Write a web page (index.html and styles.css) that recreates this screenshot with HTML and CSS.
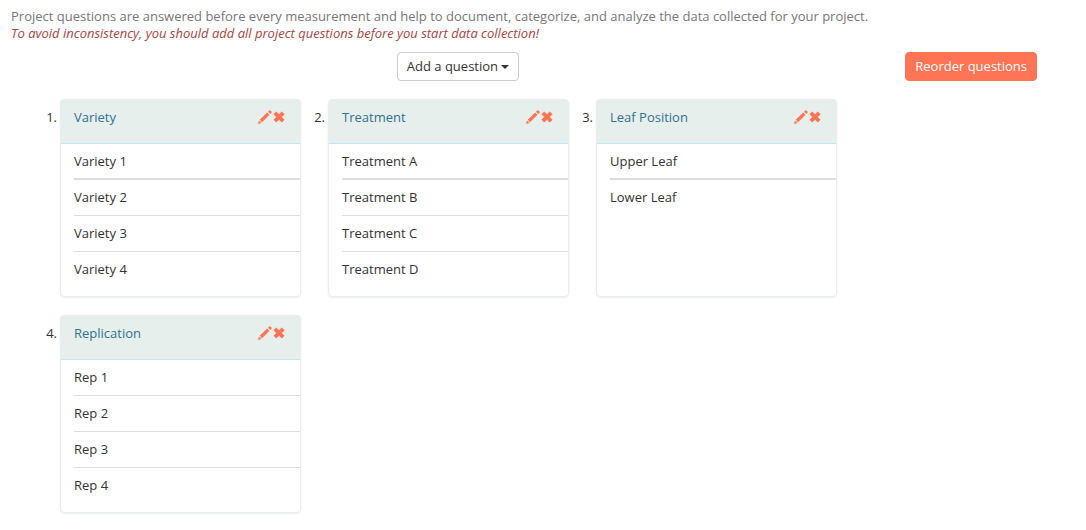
FILE: index.html
```
<!DOCTYPE html>
<html lang="en">
<head>
	<meta charset="utf-8">
	<title>Project Questions</title>
	<link rel="stylesheet" href="styles.css">
</head>
<body>
	<!-- Icon shapes -->
	<svg class="sprite" aria-hidden="true">
		<symbol id="pencil" viewBox="0 0 14 14">
			<path d="M0 14l1-3.600 2.600 2.600zM1.700 9.700L9.200 2.500l2.300 2.300-7.400 7.400zM10 1.700L11.200.5q.6-.6 1.200 0l1.100 1.100q.6.600 0 1.200l-1.200 1.200z"/>
		</symbol>
		<symbol id="remove" viewBox="0 0 12 12">
			<path d="M3.200.6L6 3.300 8.800.6 11.600 3.200 8.700 6l2.900 2.800-2.800 2.600L6 8.700l-2.800 2.700L.4 8.800 3.300 6 .4 3.200z"/>
		</symbol>
	</svg>

	<div class="intro">
		<p>Project questions are answered before every measurement and help to document, categorize, and analyze the data collected for your project.</p>
		<p class="warning">To avoid inconsistency, you should add all project questions before you start data collection!</p>
	</div>

	<div class="toolbar">
		<div class="toolbar-main">
			<button type="button" class="btn">Add a question <span class="caret"></span></button>
		</div>
		<button type="button" class="btn btn-primary">Reorder questions</button>
	</div>

	<ol class="questions">
		<li class="question">
			<span class="number">1.</span>
			<div class="card">
				<div class="card-header">
					<a href="#">Variety</a>
					<span class="actions">
						<button type="button" aria-label="Edit"><svg width="14" height="14"><use href="#pencil"/></svg></button>
						<button type="button" aria-label="Remove"><svg width="12" height="12"><use href="#remove"/></svg></button>
					</span>
				</div>
				<ul class="answers">
					<li class="thick">Variety 1</li>
					<li>Variety 2</li>
					<li>Variety 3</li>
					<li>Variety 4</li>
				</ul>
			</div>
		</li>
		<li class="question">
			<span class="number">2.</span>
			<div class="card">
				<div class="card-header">
					<a href="#">Treatment</a>
					<span class="actions">
						<button type="button" aria-label="Edit"><svg width="14" height="14"><use href="#pencil"/></svg></button>
						<button type="button" aria-label="Remove"><svg width="12" height="12"><use href="#remove"/></svg></button>
					</span>
				</div>
				<ul class="answers">
					<li class="thick">Treatment A</li>
					<li>Treatment B</li>
					<li>Treatment C</li>
					<li>Treatment D</li>
				</ul>
			</div>
		</li>
		<li class="question">
			<span class="number">3.</span>
			<div class="card">
				<div class="card-header">
					<a href="#">Leaf Position</a>
					<span class="actions">
						<button type="button" aria-label="Edit"><svg width="14" height="14"><use href="#pencil"/></svg></button>
						<button type="button" aria-label="Remove"><svg width="12" height="12"><use href="#remove"/></svg></button>
					</span>
				</div>
				<ul class="answers">
					<li class="thick">Upper Leaf</li>
					<li>Lower Leaf</li>
				</ul>
			</div>
		</li>
		<li class="question">
			<span class="number">4.</span>
			<div class="card">
				<div class="card-header">
					<a href="#">Replication</a>
					<span class="actions">
						<button type="button" aria-label="Edit"><svg width="14" height="14"><use href="#pencil"/></svg></button>
						<button type="button" aria-label="Remove"><svg width="12" height="12"><use href="#remove"/></svg></button>
					</span>
				</div>
				<ul class="answers">
					<li>Rep 1</li>
					<li>Rep 2</li>
					<li>Rep 3</li>
					<li>Rep 4</li>
				</ul>
			</div>
		</li>
	</ol>
</body>
</html>
```
FILE: styles.css
```
* { box-sizing: border-box; }
body { margin: 0; padding: 8px 0 0; background: #fff; color: #333; font: 13px/18px "Open Sans", sans-serif; }
p, ol, ul { margin: 0; padding: 0; }
ol, ul { list-style: none; }
.sprite { display: none; }

.intro { padding: 0 11px; color: #777; line-height: 17px; }
.warning { color: #a94442; font-style: italic; }

/* Toolbar */

.toolbar { display: flex; padding: 10px 49px 0 11px; }
.toolbar-main { flex: 1; text-align: center; }
.btn { height: 29px; padding: 0 9px 2px; border: 1px solid #ccc; border-radius: 4px; background: #fff; color: #333; font: inherit; cursor: pointer; }
.btn-primary { border-color: #ff7454; background: #ff7454; color: #fff; }
.caret { display: inline-block; border: 4px solid transparent; border-top-color: #333; border-bottom: 0; vertical-align: middle; }

/* Question cards */

.questions { display: grid; grid-template-columns: repeat(auto-fill, 268px); gap: 18px 0; padding: 18px 0 18px 33px; }
.question { display: flex; }
.number { width: 27px; padding: 9px 3px 0 0; text-align: right; }
.card { flex: 1; min-height: 198px; border: 1px solid #e6efec; border-radius: 4px; box-shadow: 0 1px 2px rgba(0, 0, 0, .08); }
.card-header { display: flex; justify-content: space-between; height: 44px; padding: 8px 15px 0 13px; border-bottom: 1px solid #bce8f1; background: #e6efec; }
.card-header a { color: #31708f; text-decoration: none; }
.actions { display: flex; align-items: center; gap: 1px; height: 18px; }
.actions button { display: flex; padding: 0; border: 0; background: none; color: #ff7454; cursor: pointer; }
.actions svg { fill: currentColor; }
.answers { padding: 0 0 7px 13px; }
.answers li { height: 36px; padding-top: 8px; border-bottom: 1px solid #ddd; }
.answers .thick { border-bottom-width: 2px; }
.answers li:last-child { border-bottom: 0; }
```
